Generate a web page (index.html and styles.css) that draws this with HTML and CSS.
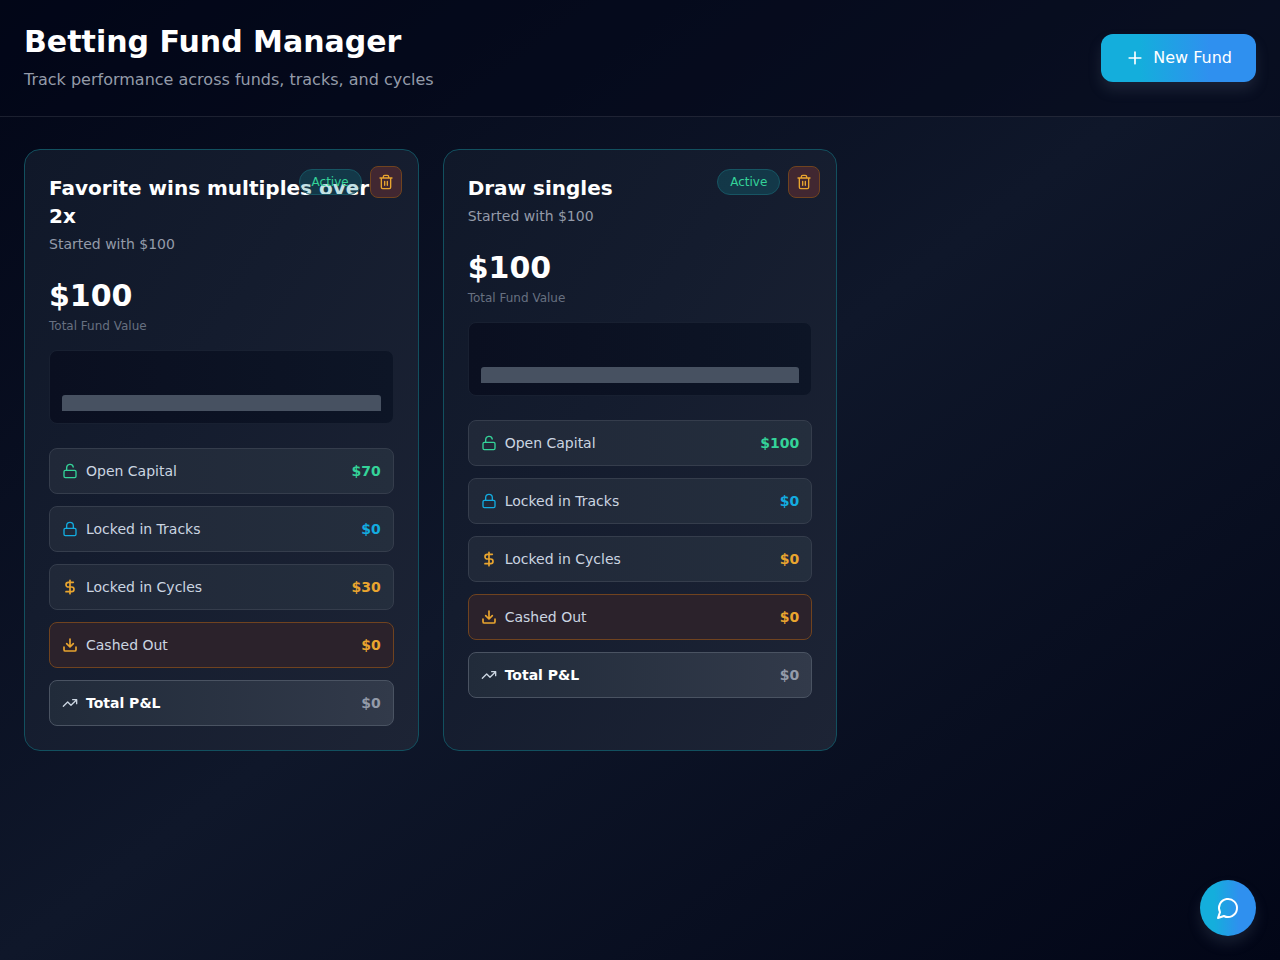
FILE: index.html
```html
<!DOCTYPE html>
<html lang="en">
<head>
<meta charset="utf-8">
<meta name="viewport" content="width=device-width, initial-scale=1">
<title>Betting Fund Manager</title>
<link rel="stylesheet" href="styles.css">
</head>
<body>
<svg class="sprite" aria-hidden="true">
  <symbol id="plus" viewBox="0 0 24 24"><path d="M5 12h14M12 5v14"/></symbol>
  <symbol id="trash" viewBox="0 0 24 24"><path d="M3 6h18M19 6v14a2 2 0 0 1-2 2H7a2 2 0 0 1-2-2V6M8 6V4a2 2 0 0 1 2-2h4a2 2 0 0 1 2 2v2M10 11v6M14 11v6"/></symbol>
  <symbol id="unlock" viewBox="0 0 24 24"><rect x="3" y="11" width="18" height="11" rx="2"/><path d="M7 11V7a5 5 0 0 1 9.9-1"/></symbol>
  <symbol id="lock" viewBox="0 0 24 24"><rect x="3" y="11" width="18" height="11" rx="2"/><path d="M7 11V7a5 5 0 0 1 10 0v4"/></symbol>
  <symbol id="dollar" viewBox="0 0 24 24"><path d="M12 2v20M17 5H9.500a3.500 3.500 0 0 0 0 7h5a3.500 3.500 0 0 1 0 7H6"/></symbol>
  <symbol id="download" viewBox="0 0 24 24"><path d="M21 15v4a2 2 0 0 1-2 2H5a2 2 0 0 1-2-2v-4M7 10l5 5 5-5M12 15V3"/></symbol>
  <symbol id="trend" viewBox="0 0 24 24"><path d="M22 7l-8.500 8.500-5-5L2 17M16 7h6v6"/></symbol>
  <symbol id="message" viewBox="0 0 24 24"><path d="M7.900 20A9 9 0 1 0 4 16.100L2 22Z"/></symbol>
</svg>

<header class="header">
  <div>
    <h1 class="header-title">Betting Fund Manager</h1>
    <p class="header-text">Track performance across funds, tracks, and cycles</p>
  </div>
  <button class="new-fund" type="button"><svg class="icon icon-md"><use href="#plus"/></svg>New Fund</button>
</header>

<main class="funds">
  <article class="card">
    <h2 class="card-title">Favorite wins multiples over 2x</h2>
    <p class="card-start">Started with $100</p>
    <p class="value">$100</p>
    <p class="value-label">Total Fund Value</p>
    <div class="chart"><div class="bar"></div></div>
    <dl class="stats">
      <div class="stat"><dt><svg class="icon green"><use href="#unlock"/></svg>Open Capital</dt><dd class="green">$70</dd></div>
      <div class="stat"><dt><svg class="icon cyan"><use href="#lock"/></svg>Locked in Tracks</dt><dd class="cyan">$0</dd></div>
      <div class="stat"><dt><svg class="icon amber"><use href="#dollar"/></svg>Locked in Cycles</dt><dd class="amber">$30</dd></div>
      <div class="stat stat-cashed"><dt><svg class="icon amber"><use href="#download"/></svg>Cashed Out</dt><dd class="amber">$0</dd></div>
      <div class="stat stat-total"><dt><svg class="icon light"><use href="#trend"/></svg>Total P&amp;L</dt><dd class="muted">$0</dd></div>
    </dl>
    <div class="card-actions">
      <span class="badge">Active</span>
      <button class="delete" type="button" aria-label="Delete fund"><svg class="icon"><use href="#trash"/></svg></button>
    </div>
  </article>

  <article class="card">
    <h2 class="card-title">Draw singles</h2>
    <p class="card-start">Started with $100</p>
    <p class="value">$100</p>
    <p class="value-label">Total Fund Value</p>
    <div class="chart"><div class="bar"></div></div>
    <dl class="stats">
      <div class="stat"><dt><svg class="icon green"><use href="#unlock"/></svg>Open Capital</dt><dd class="green">$100</dd></div>
      <div class="stat"><dt><svg class="icon cyan"><use href="#lock"/></svg>Locked in Tracks</dt><dd class="cyan">$0</dd></div>
      <div class="stat"><dt><svg class="icon amber"><use href="#dollar"/></svg>Locked in Cycles</dt><dd class="amber">$0</dd></div>
      <div class="stat stat-cashed"><dt><svg class="icon amber"><use href="#download"/></svg>Cashed Out</dt><dd class="amber">$0</dd></div>
      <div class="stat stat-total"><dt><svg class="icon light"><use href="#trend"/></svg>Total P&amp;L</dt><dd class="muted">$0</dd></div>
    </dl>
    <div class="card-actions">
      <span class="badge">Active</span>
      <button class="delete" type="button" aria-label="Delete fund"><svg class="icon"><use href="#trash"/></svg></button>
    </div>
  </article>
</main>

<button class="chat" type="button" aria-label="Open chat"><svg class="icon icon-lg"><use href="#message"/></svg></button>
</body>
</html>
```
FILE: styles.css
```css
* {
  box-sizing: border-box;
  margin: 0;
}

body {
  min-height: 100vh;
  background: linear-gradient(to bottom right, #020617, #0f172a, #020617);
  color: #fff;
  font: 16px/24px "DejaVu Sans", sans-serif;
}

button {
  font: inherit;
  cursor: pointer;
}

.sprite {
  position: absolute;
  width: 0;
  height: 0;
}

.icon {
  flex: none;
  width: 16px;
  height: 16px;
  fill: none;
  stroke: currentColor;
  stroke-width: 2;
  stroke-linecap: round;
  stroke-linejoin: round;
}

.icon-md {
  width: 20px;
  height: 20px;
}

.icon-lg {
  width: 24px;
  height: 24px;
}

.header {
  display: flex;
  align-items: center;
  justify-content: space-between;
  padding: 24px;
  border-bottom: 1px solid rgba(255, 255, 255, 0.1);
  background: rgba(2, 6, 23, 0.5);
}

.header-title {
  font-size: 30px;
  line-height: 36px;
  font-weight: 700;
}

.header-text {
  margin-top: 8px;
  color: #949ba9;
}

.new-fund {
  display: flex;
  align-items: center;
  gap: 8px;
  padding: 12px 24px;
  border: 0;
  border-radius: 12px;
  background: linear-gradient(to right, #14aedc 25%, #2f90ef 70%);
  color: #fff;
  box-shadow: 0 8px 14px rgba(100, 116, 139, 0.2);
}

.funds {
  display: grid;
  grid-template-columns: repeat(3, minmax(0, 1fr));
  gap: 24px;
  padding: 32px 24px;
}

.card {
  position: relative;
  padding: 24px;
  border: 1px solid #12505f;
  border-radius: 16px;
  background: linear-gradient(to bottom right, #101829, #141c2e 40%, #1d2435);
}

.card-title {
  font-size: 20px;
  line-height: 28px;
  font-weight: 700;
}

.card-start {
  margin-top: 4px;
  font-size: 14px;
  line-height: 20px;
  color: #949ba9;
}

.value {
  margin-top: 24px;
  font-size: 30px;
  line-height: 36px;
  font-weight: 700;
}

.value-label {
  margin-top: 4px;
  font-size: 12px;
  line-height: 16px;
  color: #677080;
}

.chart {
  display: flex;
  align-items: flex-end;
  height: 74px;
  margin-top: 16px;
  padding: 12px;
  border: 1px solid #182031;
  border-radius: 8px;
  background: linear-gradient(to right, #0a0f20, #0d1526);
}

.bar {
  flex: 1;
  height: 16px;
  border-radius: 3px 3px 0 0;
  background: #475161;
}

.stats {
  display: grid;
  gap: 12px;
  margin-top: 24px;
  font-size: 14px;
  line-height: 20px;
}

.stat {
  display: flex;
  align-items: center;
  justify-content: space-between;
  padding: 12px;
  border: 1px solid #353d4c;
  border-radius: 8px;
  background: linear-gradient(to right, #202838, #242e3d);
}

.stat dt {
  display: flex;
  align-items: center;
  gap: 8px;
  color: #cbd5e1;
}

.stat dd {
  font-weight: 700;
}

.stat .green {
  color: #34d399;
}

.stat .cyan {
  color: #13ace0;
}

.stat .amber {
  color: #e9a52f;
}

.stat .light {
  color: #cbd5e1;
}

.stat .muted {
  color: #949ba9;
}

.stat-cashed {
  border-color: #70431f;
  background: #2b222b;
}

.stat-total {
  border-color: #4a5362;
  background: linear-gradient(to right, #212b3a, #323a4a);
}

.stat-total dt {
  font-weight: 700;
  color: #fff;
}

.card-actions {
  position: absolute;
  top: 16px;
  right: 16px;
  display: flex;
  align-items: center;
  gap: 8px;
}

.badge {
  padding: 4px 12px;
  border: 1px solid #175563;
  border-radius: 13px;
  background: rgba(16, 140, 150, 0.25);
  font-size: 12px;
  line-height: 16px;
  color: #34d399;
}

.delete {
  display: grid;
  place-items: center;
  width: 32px;
  height: 32px;
  padding: 0;
  border: 1px solid #70431f;
  border-radius: 8px;
  background: #412731;
  color: #e9a52f;
}

.chat {
  position: fixed;
  right: 24px;
  bottom: 24px;
  display: grid;
  place-items: center;
  width: 56px;
  height: 56px;
  padding: 0;
  border: 0;
  border-radius: 50%;
  background: linear-gradient(to right, #14aedc 25%, #2f90ef 70%);
  color: #fff;
  box-shadow: 0 8px 14px rgba(100, 116, 139, 0.2);
}

.amber.icon {
  stroke-width: 2.5;
}
```
